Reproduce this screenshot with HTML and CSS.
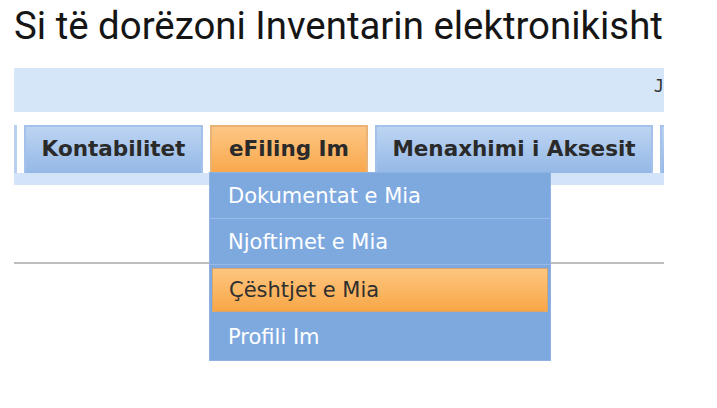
FILE: index.html
```html
<!DOCTYPE html>
<html>
<head>
<meta charset="utf-8">
<link rel="stylesheet" href="styles.css">
</head>
<body>
<h1 class="title">Si të dorëzoni Inventarin elektronikisht</h1>
<div class="shot">
  <div class="topband"><span class="peek">J</span></div>
  <div class="tabbar">
    <div class="edge"></div>
    <div class="tab t1">Kontabilitet</div>
    <div class="tab active">eFiling Im</div>
    <div class="tab t3">Menaxhimi i Aksesit</div>
    <div class="tab more"></div>
  </div>
  <div class="strip"></div>
  <div class="content">
    <div class="rule"></div>
  </div>
  <ul class="menu">
    <li class="item">Dokumentat e Mia</li>
    <li class="item">Njoftimet e Mia</li>
    <li class="item hover">Çështjet e Mia</li>
    <li class="item">Profili Im</li>
  </ul>
</div>
</body>
</html>
```
FILE: styles.css
```css
html, body {
  margin: 0;
  padding: 0;
  background: #ffffff;
}
.title {
  margin: 0;
  padding: 4px 0 0 14px;
  height: 64px;
  box-sizing: border-box;
  font-family: Roboto, "Liberation Sans", sans-serif;
  font-weight: 400;
  font-size: 38.4px;
  line-height: 44px;
  color: #151515;
  white-space: nowrap;
}
.shot {
  position: relative;
  margin: 4px 0 0 14px;
  width: 650px;
  height: 300px;
  overflow: hidden;
}
.topband {
  height: 44px;
  background: #d6e6f9;
  position: relative;
}
.peek {
  position: absolute;
  right: 0;
  top: 8px;
  font-family: "DejaVu Sans Mono", monospace;
  font-size: 17px;
  color: #333;
}
.tabbar {
  margin-top: 13px;
  display: flex;
  gap: 7px;
  height: 48px;
  align-items: stretch;
}
.edge {
  width: 3px;
  flex-shrink: 0;
  background: #b9d1f0;
}
.tab {
  flex-shrink: 0;
  box-sizing: border-box;
  border: 2px solid #a3c1ea;
  border-bottom: none;
  background: linear-gradient(#bdd4f2, #94b8e6);
  font-family: "DejaVu Sans", Verdana, sans-serif;
  font-weight: bold;
  font-size: 21.5px;
  line-height: 44px;
  color: #2a2a2a;
  text-align: center;
  white-space: nowrap;
}
.t1 { width: 179px; }
.tab.active {
  width: 158px;
  background: linear-gradient(#fdc685, #f9a84b);
  border-color: #e9b377;
}
.t3 { width: 278px; }
.tab.more { width: 20px; }
.strip {
  height: 12px;
  background: #d4e4f8;
}
.content {
  padding-top: 77px;
}
.rule {
  height: 2px;
  background: #bdbdbd;
}
.menu {
  position: absolute;
  left: 195px;
  top: 104px;
  width: 342px;
  margin: 0;
  padding: 0;
  list-style: none;
  background: #7ea9df;
  border: 1px solid #8fb4e3;
  box-sizing: border-box;
}
.item {
  height: 46px;
  box-sizing: border-box;
  padding-left: 18px;
  border-bottom: 1px solid #98bbe8;
  font-family: "DejaVu Sans", Verdana, sans-serif;
  font-size: 21px;
  line-height: 46px;
  color: #ffffff;
  white-space: nowrap;
}
.item:last-child { border-bottom: none; }
.item.hover {
  margin: 3px 2px 2px;
  height: 44px;
  padding-left: 16px;
  background: linear-gradient(#fec680, #f8a747);
  border: 1px solid #d7a56f;
  color: #2f2f2f;
  line-height: 42px;
}
```
